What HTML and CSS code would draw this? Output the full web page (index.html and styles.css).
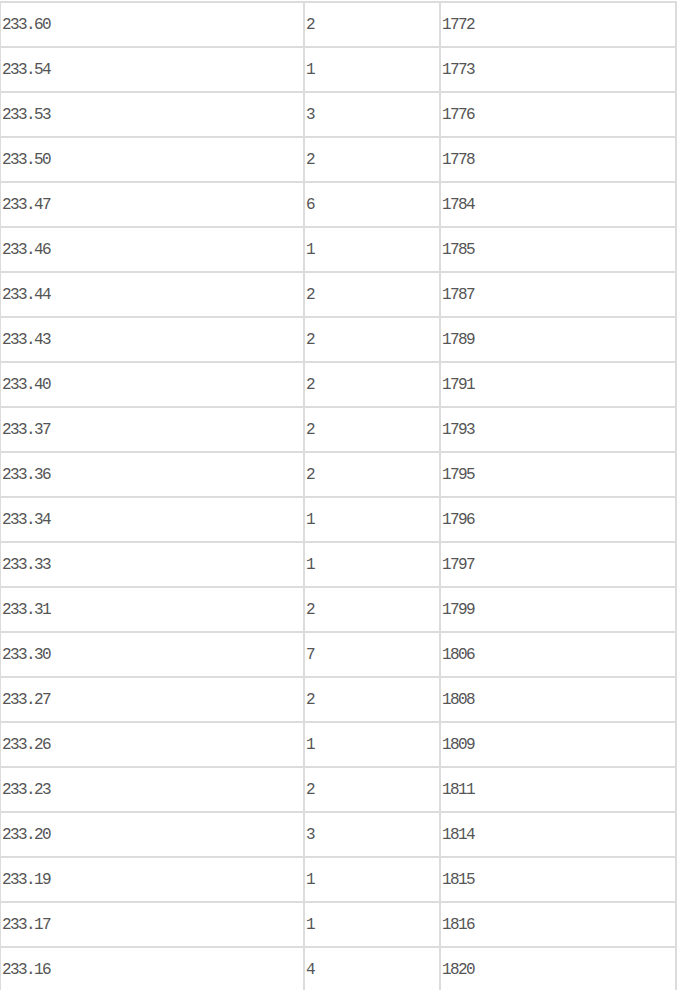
FILE: index.html
```html
<!DOCTYPE html>
<html>
<head>
<meta charset="utf-8">
<link rel="stylesheet" href="styles.css">
</head>
<body>
<table class="data">
<colgroup><col class="c1"><col class="c2"><col class="c3"></colgroup>
<tbody>
<tr><td>233.60</td><td>2</td><td>1772</td></tr>
<tr><td>233.54</td><td>1</td><td>1773</td></tr>
<tr><td>233.53</td><td>3</td><td>1776</td></tr>
<tr><td>233.50</td><td>2</td><td>1778</td></tr>
<tr><td>233.47</td><td>6</td><td>1784</td></tr>
<tr><td>233.46</td><td>1</td><td>1785</td></tr>
<tr><td>233.44</td><td>2</td><td>1787</td></tr>
<tr><td>233.43</td><td>2</td><td>1789</td></tr>
<tr><td>233.40</td><td>2</td><td>1791</td></tr>
<tr><td>233.37</td><td>2</td><td>1793</td></tr>
<tr><td>233.36</td><td>2</td><td>1795</td></tr>
<tr><td>233.34</td><td>1</td><td>1796</td></tr>
<tr><td>233.33</td><td>1</td><td>1797</td></tr>
<tr><td>233.31</td><td>2</td><td>1799</td></tr>
<tr><td>233.30</td><td>7</td><td>1806</td></tr>
<tr><td>233.27</td><td>2</td><td>1808</td></tr>
<tr><td>233.26</td><td>1</td><td>1809</td></tr>
<tr><td>233.23</td><td>2</td><td>1811</td></tr>
<tr><td>233.20</td><td>3</td><td>1814</td></tr>
<tr><td>233.19</td><td>1</td><td>1815</td></tr>
<tr><td>233.17</td><td>1</td><td>1816</td></tr>
<tr><td>233.16</td><td>4</td><td>1820</td></tr>
</tbody>
</table>
</body>
</html>
```
FILE: styles.css
```css
html, body {
  margin: 0;
  padding: 0;
  background: #fff;
}
.data {
  border-collapse: separate;
  border-spacing: 0;
  margin: 1px 0 0 -1px;
  table-layout: fixed;
  width: 678px;
  font-family: "Liberation Mono", "DejaVu Sans Mono", monospace;
  font-size: 16px;
  letter-spacing: -1.6px;
  color: #555;
}
.c1 { width: 304px; }
.c2 { width: 136px; }
.c3 { width: 238px; }
.data td {
  border-top: 2px solid #dcdcdc;
  border-left: 2px solid #dcdcdc;
  height: 42px;
  padding: 1px 0 0 1px;
  vertical-align: middle;
  line-height: 42px;
  white-space: nowrap;
}
.data td:last-child {
  border-right: 2px solid #dcdcdc;
}
```
